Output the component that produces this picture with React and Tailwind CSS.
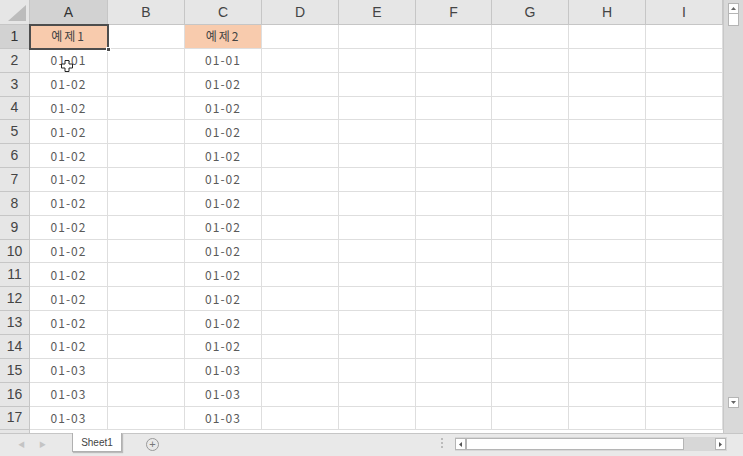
const cols = ["A", "B", "C", "D", "E", "F", "G", "H", "I"];

const values = [
  "01-01", "01-02", "01-02", "01-02", "01-02", "01-02", "01-02", "01-02",
  "01-02", "01-02", "01-02", "01-02", "01-02", "01-03", "01-03", "01-03",
];

const gridCols = "grid-cols-[30px_78px_77px_77px_77px_77px_76px_77px_77px_77px]";

function Cell({ children, className = "" }) {
  return (
    <div className={`h-[23.85px] border-r border-b border-[#dedede] flex items-center justify-center text-[12px] text-[#5a5a5a] font-['Noto_Sans_CJK_KR',sans-serif] ${className}`}>
      {children}
    </div>
  );
}

function VScroll() {
  return (
    <div className="w-[20px] bg-[#d9d9d9] border-l border-[#c8c8c8] flex flex-col items-center pt-[3px] pb-[25px]">
      <div className="w-[11px] h-[11px] bg-white border border-[#b5b5b5] flex items-center justify-center">
        <svg width="5" height="3" viewBox="0 0 5 3"><path d="M0 3 L2.5 0 L5 3 Z" fill="#666" /></svg>
      </div>
      <div className="w-[11px] h-[12px] bg-white border border-[#b5b5b5] border-t-0" />
      <div className="flex-1" />
      <div className="w-[11px] h-[11px] bg-white border border-[#b5b5b5] flex items-center justify-center">
        <svg width="5" height="3" viewBox="0 0 5 3"><path d="M0 0 L2.5 3 L5 0 Z" fill="#666" /></svg>
      </div>
    </div>
  );
}

export default function App() {
  return (
    <div className="w-[743px] h-[456px] overflow-hidden bg-white flex flex-col font-['Liberation_Sans','Noto_Sans_CJK_KR',sans-serif]">
      <div className="flex flex-1 min-h-0">
        <div className="w-[723px] flex flex-col relative">
          {/* column headers */}
          <div className={`grid ${gridCols} h-[25px] bg-[#e6e6e6]`}>
            <div className="border-r border-b border-[#c6c6c6] relative">
              <svg className="absolute right-[3px] bottom-[3px]" width="18" height="16" viewBox="0 0 18 16">
                <path d="M18 0 L18 16 L0 16 Z" fill="#bcbcbc" />
              </svg>
            </div>
            {cols.map((c, i) => (
              <div
                key={c}
                className={`border-r border-b border-[#c6c6c6] flex items-center justify-center text-[14px] ${
                  i === 0 ? "bg-[#d2d2d2] text-[#333] border-b-[#8a8a8a]" : "text-[#444]"
                }`}
              >
                {c}
              </div>
            ))}
          </div>

          {/* rows */}
          <div className="flex-1 overflow-hidden">
            <div className={`grid ${gridCols}`}>
              <div className="h-[23.85px] bg-[#d2d2d2] border-r border-r-[#8a8a8a] border-b border-[#c6c6c6] flex items-center justify-center text-[14px] text-[#333]">
                1
              </div>
              <Cell className="bg-[#f8cbad] text-[#444] text-[11px] tracking-[2px]">예제1</Cell>
              <Cell />
              <Cell className="bg-[#f8cbad] text-[#444] text-[11px] tracking-[2px]">예제2</Cell>
              {cols.slice(3).map((c) => (
                <Cell key={c} />
              ))}
              {values.map((v, r) => (
                <div key={r} className="contents">
                  <div className="h-[23.85px] bg-[#e6e6e6] border-r border-b border-[#c6c6c6] flex items-center justify-center text-[14px] text-[#444]">
                    {r + 2}
                  </div>
                  <Cell className="tracking-[1px]">{v}</Cell>
                  <Cell />
                  <Cell className="tracking-[1px]">{v}</Cell>
                  {cols.slice(3).map((c) => (
                    <Cell key={c} />
                  ))}
                </div>
              ))}
              <div className="h-[23.85px] bg-[#e6e6e6] border-r border-[#c6c6c6]" />
            </div>
          </div>

          {/* A1 selection */}
          <div className="absolute left-[29px] top-[24px] w-[80px] h-[26px] border-2 border-[#4d4d4d] pointer-events-none">
            <div className="absolute -right-[4px] -bottom-[4px] w-[5px] h-[5px] bg-[#4d4d4d] border border-white" />
          </div>

          {/* cursor */}
          <svg className="absolute left-[61px] top-[60px]" width="12" height="12" viewBox="0 0 12 12">
            <path d="M4 0.5 H8 V4 H11.5 V8 H8 V11.5 H4 V8 H0.5 V4 H4 Z" fill="#fff" stroke="#222" strokeWidth="1" />
          </svg>
        </div>
        <VScroll />
      </div>

      {/* bottom bar */}
      <div className="h-[23px] bg-[#e9e9e9] border-t border-[#c6c6c6] flex items-start">
        <div className="w-[72px] flex items-center gap-[14px] pl-[18px] pt-[6px] text-[7px] text-[#c4c4c4]">
          <span>◀</span>
          <span>▶</span>
        </div>
        <div className="-mt-px w-[50px] h-[19px] bg-white border-x border-b border-[#b0b0b0] shadow-[1px_1px_1px_#bbb] flex items-center justify-center text-[10px] text-[#444]">
          Sheet1
        </div>
        <div className="ml-[24px] mt-[4px] w-[13px] h-[13px] rounded-full border border-[#999] flex items-center justify-center text-[11px] leading-none text-[#777]">
          +
        </div>
        <div className="ml-[282px] mt-[4px] flex flex-col gap-[2px]">
          <span className="w-[2px] h-[2px] bg-[#bbb]" />
          <span className="w-[2px] h-[2px] bg-[#bbb]" />
          <span className="w-[2px] h-[2px] bg-[#bbb]" />
        </div>
        <div className="ml-[12px] mt-[3px] w-[272px] h-[14px] bg-[#d7d7d7] flex items-center">
          <div className="w-[11px] h-[12px] bg-white border border-[#b5b5b5] flex items-center justify-center">
            <svg width="3" height="5" viewBox="0 0 3 5"><path d="M3 0 L0 2.5 L3 5 Z" fill="#555" /></svg>
          </div>
          <div className="w-[218px] h-[12px] bg-white border border-[#b5b5b5]" />
          <div className="flex-1" />
          <div className="w-[11px] h-[12px] bg-white border border-[#b5b5b5] flex items-center justify-center mr-[1px]">
            <svg width="3" height="5" viewBox="0 0 3 5"><path d="M0 0 L3 2.5 L0 5 Z" fill="#555" /></svg>
          </div>
        </div>
      </div>
    </div>
  );
}
